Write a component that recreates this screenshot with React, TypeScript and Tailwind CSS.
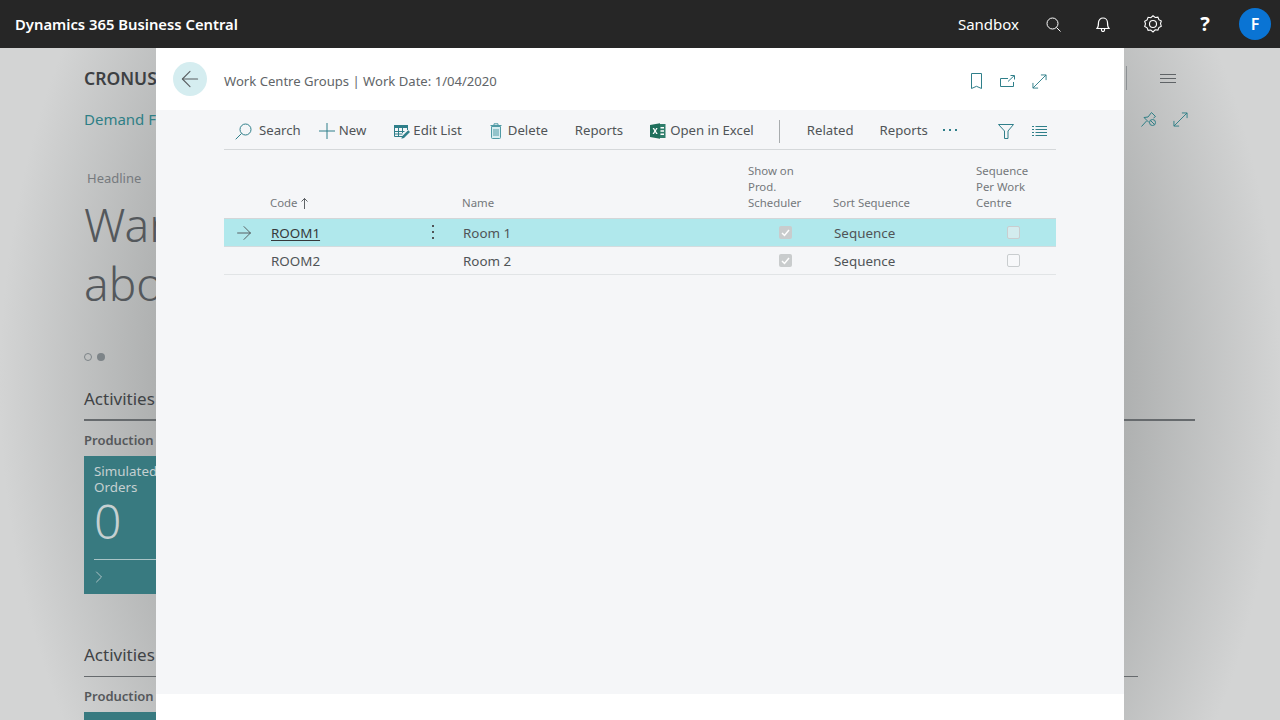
import { ArrowLeft, ArrowRight, ChevronRight } from "lucide-react";

const COLS = "grid grid-cols-[46px_192px_286px_85px_143px_80px]";

function ExpandIcon() {
  return (
    <svg viewBox="0 0 16 16" fill="none" stroke="currentColor" strokeWidth="1" className="h-[15px] w-[15px]">
      <path d="M1 15 15 1M9.500 1H15v5.500M1 9.500V15h5.500" />
    </svg>
  );
}

function BookmarkIcon() {
  return (
    <svg viewBox="0 0 11 16" fill="none" stroke="currentColor" strokeWidth="1" className="h-4 w-[11px]">
      <path d="M.5.5h10v15l-5-2.200-5 2.200z" />
    </svg>
  );
}

function OpenNewIcon() {
  return (
    <svg viewBox="0 0 15 12" fill="none" stroke="currentColor" strokeWidth="1" className="h-3 w-[15px]">
      <path d="M8 3.500H.5v8h13V7M8 6.500 14 .8M10.500.5h4v4" />
    </svg>
  );
}

function SearchIcon() {
  return (
    <svg viewBox="0 0 17 17" fill="none" stroke="currentColor" strokeWidth="1" className="h-[17px] w-[17px]">
      <circle cx="10.500" cy="6.500" r="5.500" />
      <path d="M6.600 10.400.7 16.300" />
    </svg>
  );
}

function PlusIcon() {
  return (
    <svg viewBox="0 0 16 16" fill="none" stroke="currentColor" strokeWidth="1" className="h-4 w-4">
      <path d="M8 0v16M0 8h16" />
    </svg>
  );
}

function EditListIcon() {
  return (
    <svg viewBox="0 0 16 15" className="h-[15px] w-4">
      <path fill="#2f7f8a" d="M0 1h14v3H0z" />
      <path fill="none" stroke="#2f7f8a" d="M.5 4v8.500h8M4.500 4v8.500M8.500 4v5M13.500 4v2M.5 7.500h10M.5 10h8" />
      <path fill="#2f7f8a" d="M14.200 6.200 16 8l-6 6-2.600.8.700-2.600z" />
    </svg>
  );
}

function TrashIcon() {
  return (
    <svg viewBox="0 0 12 16" fill="#d7edf0" stroke="#4f9aa5" strokeWidth="1" className="h-4 w-3">
      <path d="M1.500 3.500h9v11a1 1 0 0 1-1 1h-7a1 1 0 0 1-1-1z" />
      <path d="M.5 2.500h11M4 2.500V.8h4v1.700M4 6v7M6 6v7M8 6v7" fill="none" />
    </svg>
  );
}

function ExcelIcon() {
  return (
    <svg viewBox="0 0 16 16" className="h-4 w-4">
      <path fill="#2f7d6b" d="M9 1h6.500v14H9z" />
      <path fill="#fff" d="M10.500 4H14v1.400h-3.500zM10.500 7.300H14v1.400h-3.500zM10.500 10.600H14V12h-3.500z" />
      <path fill="#1f6f5c" d="M0 2 10 .3v15.400L0 14z" />
      <path fill="#fff" d="M2.600 5h1.500l1 1.900L6.200 5h1.400L5.900 8l1.800 3H6.200L5.100 9 4 11H2.500l1.800-3z" />
    </svg>
  );
}

function FilterIcon() {
  return (
    <svg viewBox="0 0 16 15" fill="none" stroke="currentColor" strokeWidth="1" className="h-[15px] w-4">
      <path d="M.5.5h15L10 7v7.500H6.500V7z" />
    </svg>
  );
}

function ListIcon() {
  return (
    <svg viewBox="0 0 15 11" stroke="currentColor" strokeWidth="1" className="h-[11px] w-[15px]">
      <path d="M0 .5h2M3.500.5H15M0 3.500h2M3.500 3.500H15M0 6.500h2M3.500 6.500H15M0 9.500h2M3.500 9.500H15" />
    </svg>
  );
}

function PinOffIcon() {
  return (
    <svg viewBox="0 0 16 16" fill="none" stroke="currentColor" strokeWidth="1" className="h-4 w-4">
      <path d="M.5 15.500 5.500 10M3 6.500 7 6l3.500-4.500 4 4L12.500 7M3 6.500l5 5" />
      <circle cx="11.500" cy="11.500" r="3" />
      <path d="m9.500 9.500 4 4" />
    </svg>
  );
}

function Tile() {
  return (
    <div className="h-[138px] w-[110px] bg-[#387a80] pl-[10px] pt-[7px] text-[#c5d0d1]">
      <div className="text-[13.4px] leading-4">
        Simulated
        <br />
        Orders
      </div>
      <div className="mt-[8px] text-5xl font-light leading-9">0</div>
      <div className="mt-[20px] border-t border-[#a9c4c6]" />
      <ChevronRight className="ml-[-5px] mt-[7px] h-5 w-5" strokeWidth={1} />
    </div>
  );
}

function Checkbox({ on, row }: { on: boolean; row: boolean }) {
  if (on) {
    return (
      <span className="flex h-[13px] w-[13px] items-center justify-center rounded-[2px] bg-[#c9cccd]">
        <svg viewBox="0 0 9 8" fill="none" stroke="#fff" strokeWidth="1.500" className="h-2 w-[9px]">
          <path d="m1 4 2.500 2.500L8 1" />
        </svg>
      </span>
    );
  }
  return <span className={`h-[13px] w-[13px] rounded-[2px] border border-[#c9cdcf] ${row ? "bg-[#d3ecee]" : "bg-[#f7f8fa]"}`} />;
}

function Row({ code, name, active }: { code: string; name: string; active?: boolean }) {
  return (
    <div className={`${COLS} h-7 items-center border-b text-[13.4px] text-[#505457] ${active ? "border-[#d3dcdf] bg-[#b0e8ec]" : "border-[#e1e4e6]"}`}>
      <div className="pl-[9px]">{active ? <ArrowRight className="h-[22px] w-[22px]" strokeWidth={1} /> : null}</div>
      <div className="flex items-center justify-between pl-[1px] pr-[28px]">
        <span className={`mt-[2px] ${active ? "text-[#36393b] underline underline-offset-2" : ""}`}>{code}</span>
        {active ? (
          <span className="flex flex-col gap-[4px]">
            <span className="h-[2px] w-[2px] bg-[#505457]" />
            <span className="h-[2px] w-[2px] bg-[#505457]" />
            <span className="h-[2px] w-[2px] bg-[#505457]" />
          </span>
        ) : null}
      </div>
      <div className="mt-[2px] pl-[1px]">{name}</div>
      <div className="flex pl-[31px]">
        <Checkbox on row={!!active} />
      </div>
      <div className="mt-[2px] pl-[1px]">Sequence</div>
      <div className="flex pl-[31px]">
        <Checkbox on={false} row={!!active} />
      </div>
    </div>
  );
}

export default function App() {
  return (
    <div className="flex h-[720px] w-[1280px] flex-col overflow-hidden font-['Open_Sans',sans-serif]">
      <header className="flex h-12 shrink-0 items-center bg-[#262626] pl-[15px] pr-[9px] text-white">
        <span className="text-[14.800px] font-semibold">Dynamics 365 Business Central</span>
        <span className="ml-auto mr-[9px] text-[15px]">Sandbox</span>
        <span className="flex w-[50px] justify-center">
          <svg viewBox="0 0 15 15" fill="none" stroke="currentColor" strokeWidth="1" className="h-[15px] w-[15px]">
            <circle cx="6.500" cy="6.500" r="5.500" />
            <path d="m10.500 10.500 4 4" />
          </svg>
        </span>
        <span className="flex w-[50px] justify-center">
          <svg viewBox="0 0 14 16" fill="none" stroke="currentColor" strokeWidth="1.200" className="h-4 w-[14px]">
            <path d="M1 12.500c1.500-1.500 1.500-3 1.500-6a4.500 4.500 0 0 1 9 0c0 3 0 4.500 1.500 6zM5.500 12.500v1.500a1.500 1.500 0 0 0 3 0v-1.500" />
          </svg>
        </span>
        <span className="flex w-[50px] justify-center">
          <svg viewBox="0 0 18 18" fill="none" stroke="currentColor" strokeWidth="1.100" className="h-[18px] w-[18px]">
            <path d="M9 .8l2.200 1.700 2.700-.4 1 2.600 2.400 1.300-.8 2.600.8 2.700-2.400 1.300-1 2.500-2.700-.3L9 16.900l-2.200-1.900-2.700.3-1-2.500-2.400-1.300.8-2.700-.8-2.600 2.400-1.300 1-2.600 2.700.4z" />
            <circle cx="9" cy="9" r="3.500" />
          </svg>
        </span>
        <span className="w-[52px] pl-[2px] text-center text-xl font-bold leading-none">?</span>
        <span className="ml-[9px] flex h-8 w-8 items-center justify-center rounded-full bg-[#0a74d4] text-base font-semibold">F</span>
      </header>

      <div className="relative min-h-0 flex-1 overflow-hidden bg-[radial-gradient(ellipse_660px_800px_at_640px_336px,#aeb0b0_73%,#d3d4d4_97%)] pl-[84px] pr-[85px]">
        <div className="flex items-center pt-[18px]">
          <span className="text-[17.500px] font-semibold leading-6 text-[#3d4043]">CRONUS In</span>
          <span className="ml-auto mr-[33px] h-6 border-l border-[#8d9194]" />
          <span className="flex w-[35px] flex-col gap-[3px]">
            <span className="block h-px w-4 bg-[#5f6366]" />
            <span className="block h-px w-4 bg-[#5f6366]" />
            <span className="block h-px w-4 bg-[#5f6366]" />
          </span>
        </div>
        <div className="flex items-center pt-[19px] text-[#2f7f86]">
          <span className="text-[15px] leading-5">Demand For</span>
          <span className="ml-auto mr-[16px]">
            <PinOffIcon />
          </span>
          <span className="mr-[7px]">
            <ExpandIcon />
          </span>
        </div>
        <div className="pl-[3px] pt-[40px] text-[13px] leading-[18px] text-[#767a7e]">Headline</div>
        <div className="pt-[8px] text-[46px] font-light leading-[59px] text-[#54585c]">
          Want
          <br />
          about
        </div>
        <div className="flex items-center gap-[5px] pt-[40px]">
          <span className="h-2 w-2 rounded-full border border-[#7d8488]" />
          <span className="h-2 w-2 rounded-full bg-[#7d8488]" />
        </div>
        <div className="mt-[26px] border-b-2 border-[#666a6d] pb-[8px] text-[17px] leading-[24px] text-[#404346]">Activities</div>
        <div className="pt-[10px] text-[13px] font-semibold leading-[18px] text-[#55585b]">Production</div>
        <div className="pt-[7px]">
          <Tile />
        </div>
        <div className="mr-[57px] mt-[49px] border-b border-[#666a6d] pb-[9px] text-[17px] leading-[24px] text-[#404346]">Activities</div>
        <div className="pt-[10px] text-[13px] font-semibold leading-[18px] text-[#55585b]">Production</div>
        <div className="mt-[7px] h-10 w-[110px] bg-[#387a80]" />

        <div className="absolute bottom-0 left-[156px] top-0 flex w-[968px] flex-col bg-white">
          <div className="flex h-[62px] shrink-0 items-center pl-[17px] pr-[77px] text-[#2f7f8a]">
            <span className="flex h-[34px] w-[34px] items-center justify-center rounded-full bg-[#d5edf0] text-[#5a5e61]">
              <ArrowLeft className="h-[26px] w-[26px]" strokeWidth={1} />
            </span>
            <span className="ml-[17px] mt-[6px] text-[13.100px] text-[#616568]">Work Centre Groups | Work Date: 1/04/2020</span>
            <span className="ml-auto mt-1">
              <BookmarkIcon />
            </span>
            <span className="ml-[18px] mt-1">
              <OpenNewIcon />
            </span>
            <span className="ml-[17px] mt-1">
              <ExpandIcon />
            </span>
          </div>

          <div className="flex-1 bg-[#f5f6f8] pl-[68px] pr-[68px]">
            <div className="flex h-10 items-center border-b border-[#d5d8da] pt-[3px] text-[13.200px] text-[#505457]">
              <span className="ml-[11px] mr-[7px] text-[#2f7f8a]">
                <SearchIcon />
              </span>
              <span>Search</span>
              <span className="ml-[18px] mr-[4px] text-[#2f7f8a]">
                <PlusIcon />
              </span>
              <span>New</span>
              <span className="ml-[28px] mr-[3px]">
                <EditListIcon />
              </span>
              <span>Edit List</span>
              <span className="ml-[28px] mr-[6px]">
                <TrashIcon />
              </span>
              <span>Delete</span>
              <span className="ml-[27px]">Reports</span>
              <span className="ml-[27px] mr-[4px]">
                <ExcelIcon />
              </span>
              <span>Open in Excel</span>
              <span className="ml-[25px] h-[23px] border-l border-[#a8acae]" />
              <span className="ml-[27px]">Related</span>
              <span className="ml-[26px]">Reports</span>
              <span className="mb-[2px] ml-[15px] flex gap-[4px]">
                <span className="h-[2px] w-[2px] bg-[#2f7f8a]" />
                <span className="h-[2px] w-[2px] bg-[#2f7f8a]" />
                <span className="h-[2px] w-[2px] bg-[#2f7f8a]" />
              </span>
              <span className="ml-auto text-[#2f7f8a]">
                <FilterIcon />
              </span>
              <span className="ml-[18px] mr-[9px] text-[#2f7f8a]">
                <ListIcon />
              </span>
            </div>

            <div className={`${COLS} h-[69px] items-end border-b border-[#d3d6d8] pb-[7px] text-[11.400px] leading-4 text-[#74787b]`}>
              <div />
              <div className="flex items-center gap-[3px]">
                Code
                <svg viewBox="0 0 7 11" fill="none" stroke="#5f6366" strokeWidth="1" className="h-[11px] w-[7px]">
                  <path d="M3.500 0v11M.5 3.500l3-3 3 3" />
                </svg>
              </div>
              <div>Name</div>
              <div>
                Show on
                <br />
                Prod.
                <br />
                Scheduler
              </div>
              <div>Sort Sequence</div>
              <div>
                Sequence
                <br />
                Per Work
                <br />
                Centre
              </div>
            </div>

            <Row code="ROOM1" name="Room 1" active />
            <Row code="ROOM2" name="Room 2" />
          </div>

          <div className="h-[26px] shrink-0 bg-white" />
        </div>
      </div>
    </div>
  );
}
